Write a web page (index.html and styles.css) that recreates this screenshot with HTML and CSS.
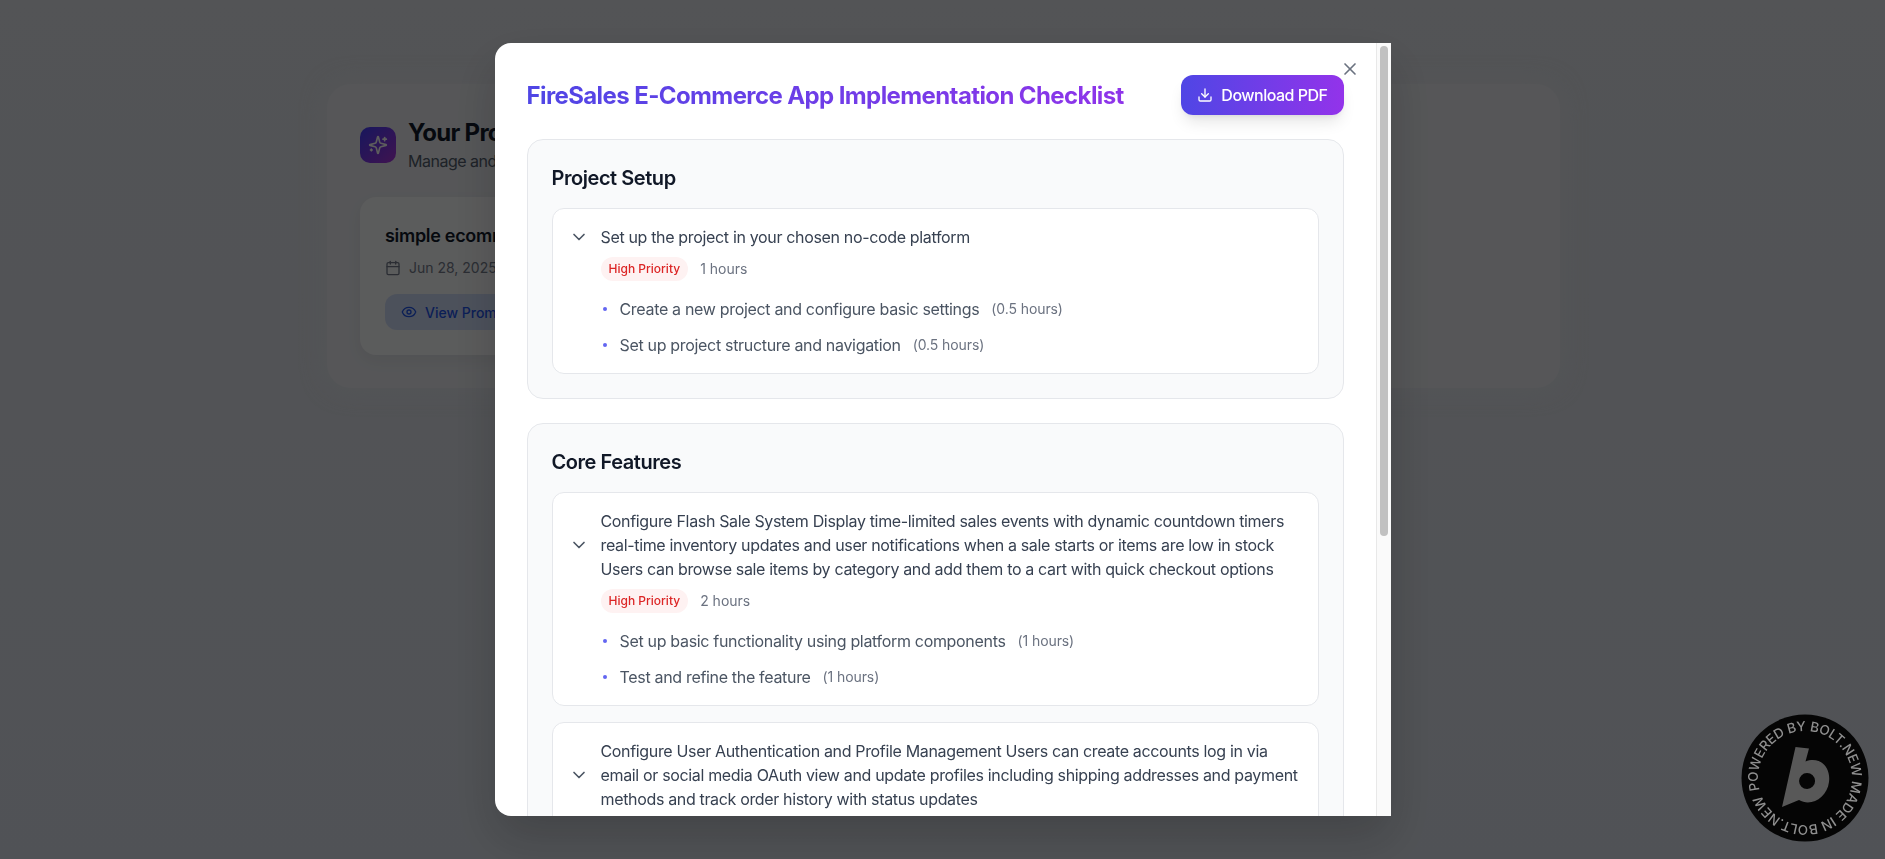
FILE: index.html
```html
<!DOCTYPE html>
<html lang="en">
<head>
<meta charset="utf-8">
<title>FireSales E-Commerce App Implementation Checklist</title>
<link rel="stylesheet" href="styles.css">
</head>
<body>
<main class="page">
  <section class="panel">
    <header class="panel-head">
      <span class="logo">
        <svg viewBox="0 0 24 24" width="20" height="20" fill="none" stroke="currentColor" stroke-width="2" stroke-linecap="round" stroke-linejoin="round"><path d="M9.937 15.5A2 2 0 0 0 8.5 14.063l-6.135-1.582a.5.5 0 0 1 0-.962L8.5 9.936A2 2 0 0 0 9.937 8.5l1.582-6.135a.5.5 0 0 1 .963 0L14.063 8.5A2 2 0 0 0 15.5 9.937l6.135 1.581a.5.5 0 0 1 0 .964L15.5 14.063a2 2 0 0 0-1.437 1.437l-1.582 6.135a.5.5 0 0 1-.963 0z"/><path d="M20 3v4"/><path d="M22 5h-4"/><path d="M4 17v2"/><path d="M5 18H3"/></svg>
      </span>
      <div>
        <h1 class="panel-title">Your Prompts</h1>
        <p class="panel-sub">Manage and revisit your saved prompts</p>
      </div>
    </header>
    <article class="prompt-card">
      <h2 class="prompt-title">simple ecommerce app</h2>
      <p class="prompt-date">
        <svg viewBox="0 0 24 24" width="16" height="16" fill="none" stroke="currentColor" stroke-width="2" stroke-linecap="round" stroke-linejoin="round"><path d="M8 2v4"/><path d="M16 2v4"/><rect x="3" y="4" width="18" height="18" rx="2"/><path d="M3 10h18"/></svg>
        Jun 28, 2025
      </p>
      <span class="prompt-view">
        <svg viewBox="0 0 24 24" width="16" height="16" fill="none" stroke="currentColor" stroke-width="2" stroke-linecap="round" stroke-linejoin="round"><path d="M2.062 12.348a1 1 0 0 1 0-.696 10.75 10.75 0 0 1 19.876 0 1 1 0 0 1 0 .696 10.75 10.75 0 0 1-19.876 0"/><circle cx="12" cy="12" r="3"/></svg>
        View Prompt
      </span>
    </article>
  </section>
</main>

<div class="overlay"></div>

<div class="modal-wrap">
  <div class="modal">
    <div class="modal-scroll">
      <header class="modal-head">
        <h2 class="modal-title">FireSales E-Commerce App Implementation Checklist</h2>
        <button class="download" type="button">
          <svg viewBox="0 0 24 24" width="16" height="16" fill="none" stroke="currentColor" stroke-width="2" stroke-linecap="round" stroke-linejoin="round"><path d="M21 15v4a2 2 0 0 1-2 2H5a2 2 0 0 1-2-2v-4"/><polyline points="7 10 12 15 17 10"/><line x1="12" y1="15" x2="12" y2="3"/></svg>
          Download PDF
        </button>
      </header>

      <section class="group">
        <h3 class="group-title">Project Setup</h3>
        <div class="items">
          <article class="item">
            <div class="item-head">
              <svg class="chev" viewBox="0 0 24 24" width="20" height="20" fill="none" stroke="currentColor" stroke-width="2" stroke-linecap="round" stroke-linejoin="round"><path d="m6 9 6 6 6-6"/></svg>
              <p class="item-text">Set up the project in your chosen no-code platform</p>
            </div>
            <div class="item-meta"><span class="badge">High Priority</span><span class="hours">1 hours</span></div>
            <ul class="subs">
              <li class="sub"><span class="dot"></span><span>Create a new project and configure basic settings</span><span class="sub-hours">(0.5 hours)</span></li>
              <li class="sub"><span class="dot"></span><span>Set up project structure and navigation</span><span class="sub-hours">(0.5 hours)</span></li>
            </ul>
          </article>
        </div>
      </section>

      <section class="group">
        <h3 class="group-title">Core Features</h3>
        <div class="items">
          <article class="item">
            <div class="item-head">
              <svg class="chev" viewBox="0 0 24 24" width="20" height="20" fill="none" stroke="currentColor" stroke-width="2" stroke-linecap="round" stroke-linejoin="round"><path d="m6 9 6 6 6-6"/></svg>
              <p class="item-text">Configure Flash Sale System Display time-limited sales events with dynamic countdown timers real-time inventory updates and user notifications when a sale starts or items are low in stock Users can browse sale items by category and add them to a cart with quick checkout options</p>
            </div>
            <div class="item-meta"><span class="badge">High Priority</span><span class="hours">2 hours</span></div>
            <ul class="subs">
              <li class="sub"><span class="dot"></span><span>Set up basic functionality using platform components</span><span class="sub-hours">(1 hours)</span></li>
              <li class="sub"><span class="dot"></span><span>Test and refine the feature</span><span class="sub-hours">(1 hours)</span></li>
            </ul>
          </article>
          <article class="item">
            <div class="item-head">
              <svg class="chev" viewBox="0 0 24 24" width="20" height="20" fill="none" stroke="currentColor" stroke-width="2" stroke-linecap="round" stroke-linejoin="round"><path d="m6 9 6 6 6-6"/></svg>
              <p class="item-text">Configure User Authentication and Profile Management Users can create accounts log in via email or social media OAuth view and update profiles including shipping addresses and payment methods and track order history with status updates</p>
            </div>
          </article>
        </div>
      </section>
    </div>
    <div class="scrollbar"><span class="thumb"></span></div>
    <button class="close" type="button" aria-label="Close">
      <svg viewBox="0 0 24 24" width="20" height="20" fill="none" stroke="currentColor" stroke-width="2" stroke-linecap="round" stroke-linejoin="round"><path d="M18 6 6 18"/><path d="m6 6 12 12"/></svg>
    </button>
  </div>
</div>

<aside class="bolt">
  <svg viewBox="0 0 128 128" width="128" height="128">
    <defs><path id="ring" d="M17 64 a47 47 0 1 1 94 0 a47 47 0 1 1 -94 0"/></defs>
    <circle cx="64" cy="64" r="63.5" class="bolt-disc"/>
    <path class="bolt-b" fill-rule="evenodd" d="M54.5 33 L68 34.5 L64.5 47.5 C78 42 90 52 88 68 C86 84 70 93 58 86 L41 93 Z M66 59 a8 8 0 1 0 .1 16 a8 8 0 1 0 -.1 -16 Z"/>
    <text class="bolt-text" transform="rotate(-15 64 64)"><textPath href="#ring" textLength="290">POWERED BY BOLT.NEW MADE IN BOLT.NEW</textPath></text>
  </svg>
</aside>
</body>
</html>
```
FILE: styles.css
```css
* { box-sizing: border-box; }
html, body { height: 100%; }
body {
  margin: 0;
  overflow: hidden;
  font-family: Inter, "Liberation Sans", sans-serif;
  background: linear-gradient(180deg, #cfd1d6 0%, #c9ced6 100%);
  color: #111827;
}
h1, h2, h3, p, ul { margin: 0; padding: 0; }
button { font: inherit; border: 0; cursor: pointer; }

/* page behind the dialog */
.page { padding: 84px 325px 0 327px; }
.panel {
  height: 304px;
  padding: 33px;
  border-radius: 24px;
  background: #d6d8dc;
  box-shadow: 0 0 24px rgba(220, 222, 226, .5);
}
.panel-head { display: flex; align-items: center; gap: 12px; margin-bottom: 24px; }
.logo {
  display: flex; align-items: center; justify-content: center;
  width: 36px; height: 36px;
  border-radius: 10px;
  background: linear-gradient(135deg, #3b3ae8, #a030c8);
  color: #e8e8e8;
}
.panel-title { font-size: 24px; line-height: 32px; font-weight: 700; letter-spacing: -.7px; }
.panel-sub { font-size: 16px; line-height: 24px; color: #4b5563; letter-spacing: -.5px; }
.prompt-card {
  width: 380px;
  padding: 25px;
  border-radius: 16px;
  background: #e4e5e6;
  box-shadow: 0 6px 16px rgba(0, 0, 0, .05);
}
.prompt-title { font-size: 18px; line-height: 28px; font-weight: 600; letter-spacing: -.3px; }
.prompt-date { display: flex; align-items: center; gap: 8px; margin-top: 8px; font-size: 14px; line-height: 20px; color: #6b7280; }
.prompt-view {
  display: inline-flex; align-items: center; gap: 8px;
  height: 36px; margin-top: 16px; padding: 0 16px;
  border-radius: 12px;
  background: #bfcbe4;
  color: #1d4ed8;
  font-size: 14px; font-weight: 500;
}

.overlay { position: fixed; inset: 0; background: rgba(0, 0, 0, .6); }

/* dialog */
.modal-wrap {
  position: fixed; inset: 0;
  display: flex; align-items: center; justify-content: center;
  filter: drop-shadow(0 22px 24px rgba(0, 0, 0, .18));
}
.modal {
  position: relative;
  display: flex;
  width: 896px;
  height: 773px;
  overflow: hidden;
  border-radius: 16px 0 0 16px;
  background: #fff;
}
.modal-scroll { flex: 1; min-width: 0; padding: 32px; overflow: hidden; }
.scrollbar {
  flex: none;
  width: 15px;
  padding: 3px 3px 0;
  border-left: 1px solid #e8e8e8;
  background: #fafafa;
}
.thumb { display: block; width: 8px; height: 490px; border-radius: 4px; background: #c1c1c1; }
.close {
  position: absolute; top: 16px; right: 31px;
  width: 20px; height: 20px; padding: 0;
  background: none; color: #6b7280;
}
.modal-head { display: flex; align-items: center; justify-content: space-between; gap: 16px; margin-bottom: 24px; }
.modal-title {
  flex: 1;
  padding-top: 1px;
  font-size: 24px; line-height: 32px; font-weight: 700; letter-spacing: -.6px;
  background: linear-gradient(90deg, #4f46e5, #9333ea);
  -webkit-background-clip: text; background-clip: text;
  color: transparent;
}
.download {
  display: flex; align-items: center; gap: 8px;
  height: 40px; padding: 0 16px;
  border-radius: 12px;
  background: linear-gradient(90deg, #4f46e5, #9333ea);
  color: #fff;
  font-size: 16px; font-weight: 500; letter-spacing: -.5px;
  box-shadow: 0 10px 15px -3px rgba(0, 0, 0, .1), 0 4px 6px -4px rgba(0, 0, 0, .1);
}

.group {
  margin-bottom: 24px;
  padding: 24px;
  border: 1px solid #e5e7eb;
  border-radius: 16px;
  background: #f9fafb;
}
.group-title { margin-bottom: 16px; font-size: 20px; line-height: 28px; font-weight: 600; letter-spacing: -.45px; color: #111827; }
.items { display: flex; flex-direction: column; gap: 16px; }
.item { padding: 16px; border: 1px solid #e5e7eb; border-radius: 12px; background: #fff; }
.item-head { display: flex; align-items: center; gap: 12px; }
.chev { flex: none; color: #4b5563; }
.item-text { font-size: 16px; line-height: 24px; letter-spacing: -.34px; color: #374151; }
.item-meta { display: flex; align-items: center; gap: 12px; margin: 8px 0 0 32px; }
.badge {
  height: 24px; padding: 0 8px;
  border-radius: 12px;
  background: #fef2f2; color: #dc2626;
  font-size: 12px; line-height: 24px; font-weight: 500;
}
.hours { font-size: 14px; line-height: 20px; color: #6b7280; }
.subs { list-style: none; display: flex; flex-direction: column; gap: 12px; margin: 16px 0 0 32px; }
.sub { display: flex; align-items: center; font-size: 16px; line-height: 24px; letter-spacing: -.32px; color: #4b5563; }
.dot { flex: none; width: 4px; height: 4px; margin: 0 13px 0 2px; border-radius: 50%; background: #6366f1; }
.sub-hours { margin-left: 12px; font-size: 14px; letter-spacing: -.1px; color: #6b7280; }

/* floating badge */
.bolt { position: fixed; left: 1741px; top: 714px; width: 128px; height: 128px; }
.bolt-disc { fill: #050505; }
.bolt-b { fill: #585858; }
.bolt-text { fill: #8f8f8f; font-family: Inter, "Liberation Sans", sans-serif; font-size: 13.5px; font-weight: 500; }
```
